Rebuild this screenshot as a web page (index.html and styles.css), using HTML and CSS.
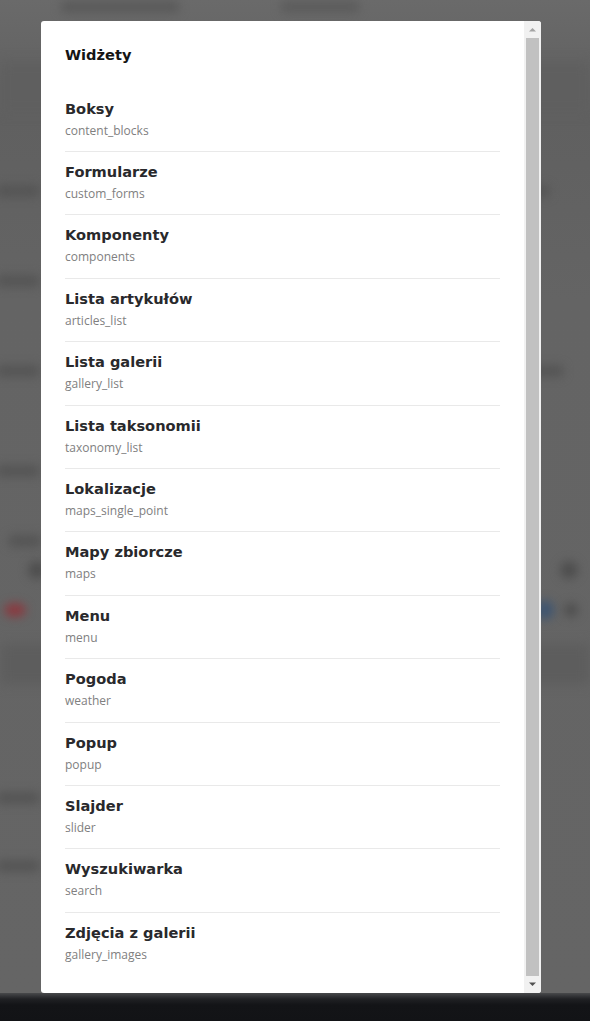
FILE: index.html
```html
<!DOCTYPE html>
<html lang="pl">
<head>
<meta charset="utf-8">
<title>Widżety</title>
<link rel="stylesheet" href="styles.css">
</head>
<body>
<div class="backdrop">
  <div class="strip s-top"><span class="blob b1"></span><span class="blob b2"></span></div>
  <div class="strip s-band"></div>
  <div class="strip s-gap1"></div>
  <div class="strip s-text"><span class="blob b3"></span><span class="spacer"></span><span class="blob b4"></span></div>
  <div class="strip s-gap2"></div>
  <div class="strip s-text"><span class="blob b3"></span></div>
  <div class="strip s-gap3"></div>
  <div class="strip s-text"><span class="blob b3"></span><span class="spacer"></span><span class="blob b5"></span></div>
  <div class="strip s-gap4"></div>
  <div class="strip s-text"><span class="blob b3"></span></div>
  <div class="strip s-gap5"></div>
  <div class="strip s-text"><span class="blob b6"></span></div>
  <div class="strip s-icons"><span class="dot grey"></span><span class="spacer"></span><span class="dot grey"></span></div>
  <div class="strip s-icons"><span class="dot red"></span><span class="spacer"></span><span class="dot blue"></span><span class="dot grey small"></span></div>
  <div class="strip s-band2"></div>
  <div class="strip s-gap6"></div>
  <div class="strip s-text"><span class="blob b3"></span></div>
  <div class="strip s-gap7"></div>
  <div class="strip s-text"><span class="blob b3"></span></div>
  <div class="strip s-rest"></div>
  <div class="taskbar"></div>
</div>

<div class="modal">
  <div class="modal-body">
    <h2 class="modal-title">Widżety</h2>
    <ul class="widget-list">
      <li class="widget"><span class="w-name">Boksy</span><span class="w-key">content_blocks</span></li>
      <li class="widget"><span class="w-name">Formularze</span><span class="w-key">custom_forms</span></li>
      <li class="widget"><span class="w-name">Komponenty</span><span class="w-key">components</span></li>
      <li class="widget"><span class="w-name">Lista artykułów</span><span class="w-key">articles_list</span></li>
      <li class="widget"><span class="w-name">Lista galerii</span><span class="w-key">gallery_list</span></li>
      <li class="widget"><span class="w-name">Lista taksonomii</span><span class="w-key">taxonomy_list</span></li>
      <li class="widget"><span class="w-name">Lokalizacje</span><span class="w-key">maps_single_point</span></li>
      <li class="widget"><span class="w-name">Mapy zbiorcze</span><span class="w-key">maps</span></li>
      <li class="widget"><span class="w-name">Menu</span><span class="w-key">menu</span></li>
      <li class="widget"><span class="w-name">Pogoda</span><span class="w-key">weather</span></li>
      <li class="widget"><span class="w-name">Popup</span><span class="w-key">popup</span></li>
      <li class="widget"><span class="w-name">Slajder</span><span class="w-key">slider</span></li>
      <li class="widget"><span class="w-name">Wyszukiwarka</span><span class="w-key">search</span></li>
      <li class="widget last"><span class="w-name">Zdjęcia z galerii</span><span class="w-key">gallery_images</span></li>
    </ul>
  </div>
  <div class="scrollbar">
    <svg class="arrow" width="17" height="17" viewBox="0 0 17 17"><path d="M5 10.5 L8.5 7 L12 10.5 Z" fill="#a3a3a3"/></svg>
    <div class="thumb"></div>
    <svg class="arrow" width="17" height="17" viewBox="0 0 17 17"><path d="M5 6.5 L8.5 10 L12 6.5 Z" fill="#505050"/></svg>
  </div>
</div>
</body>
</html>
```
FILE: styles.css
```css
* { box-sizing: border-box; }
html, body { margin: 0; padding: 0; }
body {
  width: 590px;
  height: 1021px;
  overflow: hidden;
  background: #656565;
  position: relative;
  font-family: "Open Sans", "Noto Sans", sans-serif;
}

/* blurred page behind the overlay */
.backdrop {
  display: flex;
  flex-direction: column;
  height: 1021px;
  background: linear-gradient(#6a6a6a 0, #646464 60px, #606060 120px, #646464 300px, #656565 1000px);
}
.strip { display: flex; align-items: center; flex: none; }
.spacer { flex: 1; }
.blob { display: block; height: 12px; border-radius: 6px; background: #555555; filter: blur(5px); }
.dot { display: block; border-radius: 50%; filter: blur(5px); }
.s-top { height: 14px; padding-left: 60px; gap: 100px; }
.b1 { width: 120px; background: #5a5a5a; }
.b2 { width: 80px; background: #5c5c5c; }
.s-band { height: 50px; margin-top: 48px; background: #5f5f5f; filter: blur(6px); }
.s-gap1 { height: 70px; }
.s-text { height: 18px; padding: 0 10px 0 0; }
.b3 { width: 44px; margin-left: -4px; }
.b4 { width: 24px; margin-right: 30px; }
.b5 { width: 34px; margin-right: 16px; }
.b6 { width: 34px; margin-left: 8px; }
.s-gap2 { height: 72px; }
.s-gap3 { height: 72px; }
.s-gap4 { height: 82px; }
.s-gap5 { height: 52px; }
.s-icons { height: 40px; padding: 0 12px 0 28px; gap: 10px; }
.grey { width: 18px; height: 18px; background: #4e4e4e; }
.grey.small { width: 14px; height: 14px; }
.red { width: 22px; height: 14px; background: #8a3a40; margin-left: -24px; }
.blue { width: 18px; height: 20px; background: #3f5570; }
.s-band2 { height: 40px; margin-top: 14px; background: #5d5d5d; filter: blur(6px); }
.s-gap6 { height: 105px; }
.s-gap7 { height: 50px; }
.s-rest { flex: 1; }
.taskbar {
  height: 28px;
  flex: none;
  background: linear-gradient(#48494b 0, #202124 6px, #131417 12px, #121316 28px);
}

/* modal */
.modal {
  position: absolute;
  left: 41px;
  top: 21px;
  width: 500px;
  height: 972px;
  background: #ffffff;
  border-radius: 3px;
  display: flex;
  overflow: hidden;
}
.modal-body {
  flex: 1;
  padding: 24px 24px 0 24px;
}
.modal-title {
  margin: 0;
  padding-bottom: 23.6px;
  font-family: "DejaVu Sans", sans-serif;
  font-weight: bold;
  font-size: 14.6px;
  line-height: 20px;
  color: #151515;
}
.widget-list { list-style: none; margin: 0; padding: 0; }
.widget {
  display: flex;
  flex-direction: column;
  padding: 10px 0 11.4px;
  border-bottom: 1px solid #e9e9e9;
}
.widget.last { border-bottom: none; }
.w-name {
  font-family: "DejaVu Sans", sans-serif;
  font-weight: bold;
  font-size: 14.6px;
  line-height: 20px;
  color: #29292c;
}
.w-key {
  margin-top: 3px;
  font-family: "Open Sans", sans-serif;
  font-size: 12px;
  line-height: 18px;
  color: #808080;
}

/* scrollbar */
.scrollbar {
  width: 17px;
  flex: none;
  background: #f1f1f1;
  display: flex;
  flex-direction: column;
  align-items: center;
}
.arrow { display: block; flex: none; }
.thumb {
  flex: 1;
  width: 13px;
  background: #c1c1c1;
}
```
